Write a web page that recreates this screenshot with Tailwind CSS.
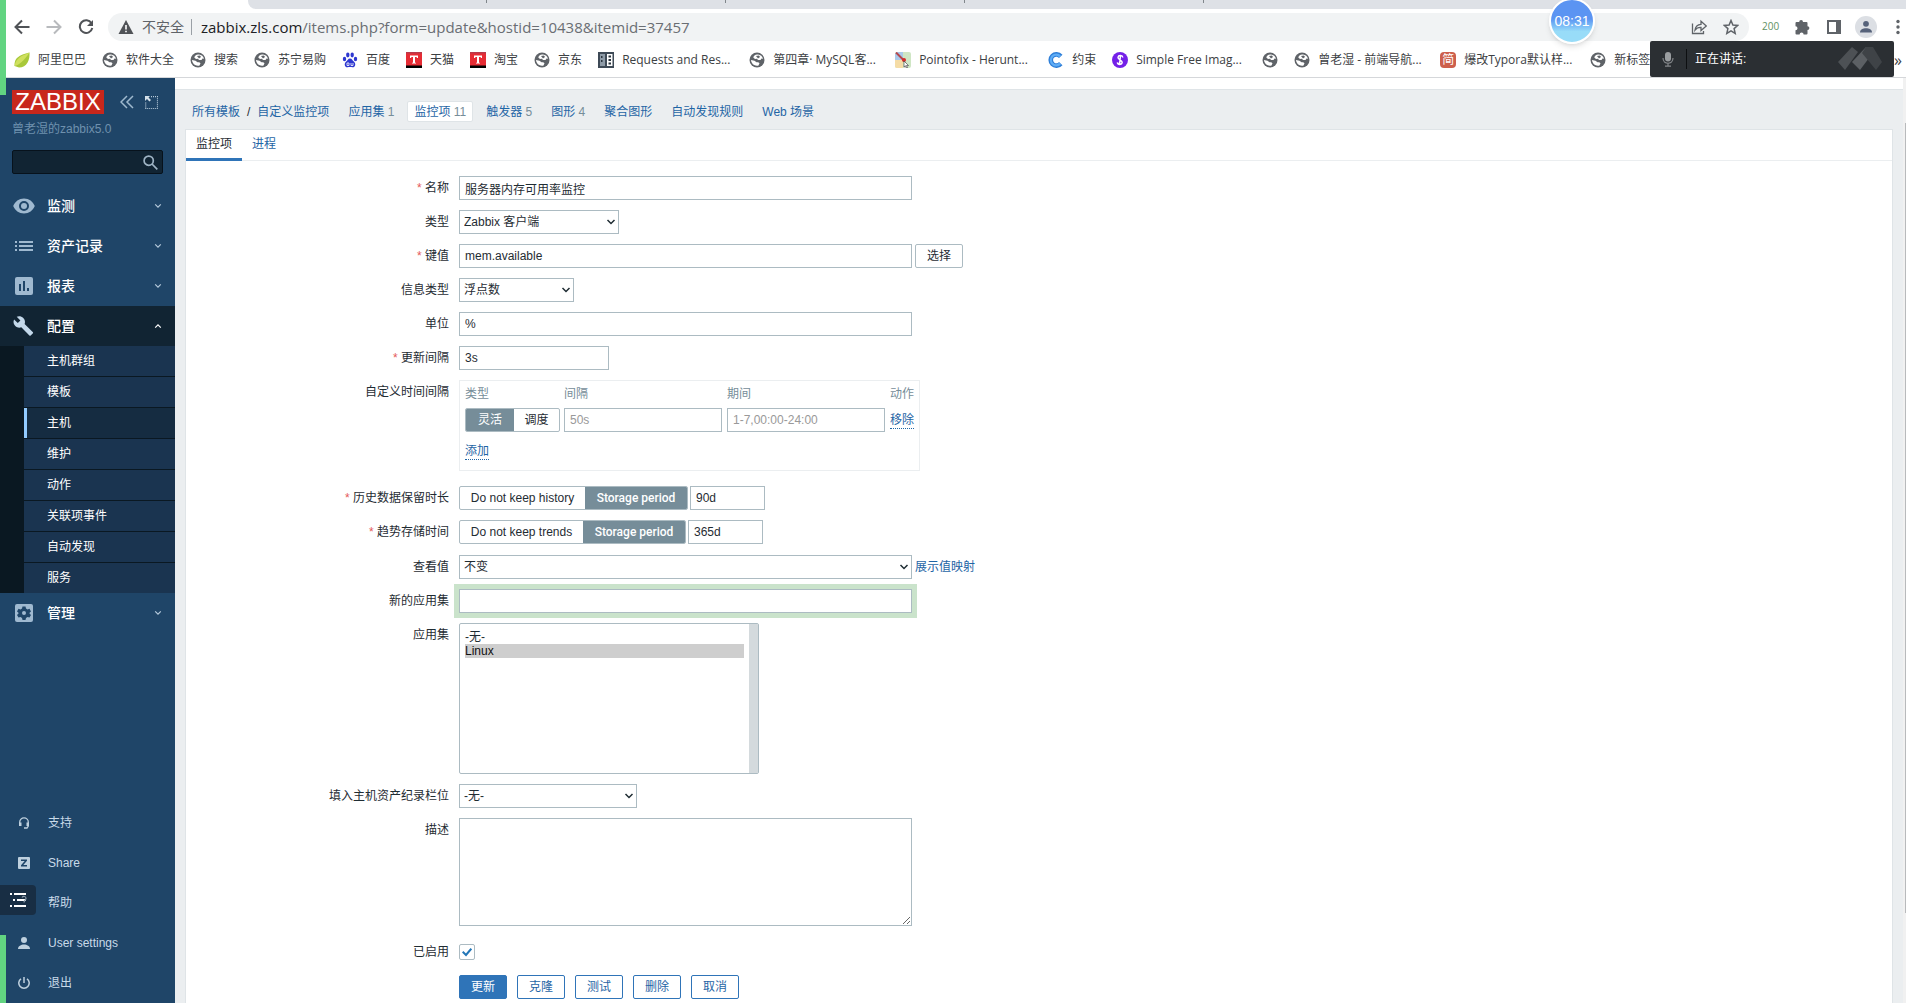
<!DOCTYPE html>
<html lang="zh-CN">
<head>
<meta charset="utf-8">
<title>配置监控项</title>
<script src="https://cdn.jsdelivr.net/npm/@tailwindcss/browser@4"></script>
</head>
<body class="relative flex min-h-screen flex-col overflow-x-hidden bg-white font-['Liberation_Sans','Noto_Sans_CJK_SC',sans-serif] text-xs text-[#1f2c33]">

<!-- Shared symbols -->
<svg class="hidden" aria-hidden="true">
  <symbol id="globe" viewBox="0 0 16 16"><circle cx="8" cy="8" r="7.500" fill="#5f6368"/><path d="M9 2.500C6.500 2 4.500 3.500 4.300 5.500L6 7l2-.3 1 1.300h2.500l1-1.500 1.500.3C13.600 4.500 11.500 2.700 9 2.500z" fill="#fff"/><path d="M2 8l3.500.8 2 1.500h1.700l1.300 1-1 2.200C6 14.500 2.300 12 2 8z" fill="#fff"/><path d="M7 4l3-.5 1 1.500-2 1.500z" fill="#5f6368"/></symbol>
  <symbol id="down" viewBox="0 0 10 10"><path d="M1.500 3L5 6.500 8.500 3" fill="none" stroke="currentColor" stroke-width="1.500"/></symbol>
  <symbol id="tmall" viewBox="0 0 16 16"><path d="M0 0h16v16H0z" fill="#e62c34"/><path d="M0 0h16v1.500H0z" fill="#b93a4a"/><path d="M0 13.500h16V16H0z" fill="#000"/><path d="M4 3.500h8v2.500h-1l-.5-1H9v5.500l1 .5v.5H6V11l1-.5V5H5.500L5 6H4z" fill="#fff"/></symbol>
</svg>

<!-- Browser chrome -->
<header class="font-['Open_Sans','Noto_Sans_CJK_SC',sans-serif]">
  <div class="flex h-[9px] bg-white pl-[248px]">
    <div class="flex flex-1 rounded-bl-lg bg-[#dee1e6]">
      <div class="h-[3px] w-[239px] border-r border-[#80868b]"></div>
      <div class="h-[3px] w-[239px] border-r border-[#80868b]"></div>
      <div class="h-[3px] w-[239px] border-r border-[#80868b]"></div>
      <div class="h-[3px] w-[239px] border-r border-[#80868b]"></div>
    </div>
  </div>
  <div class="flex h-9 items-center pl-[14px]">
    <button aria-label="后退"><svg class="size-4" viewBox="0 0 16 16" fill="none" stroke="#505357" stroke-width="2"><path d="M15.500 8H2M8 1.500L1.500 8 8 14.500"/></svg></button>
    <button aria-label="前进" class="ml-4"><svg class="size-4" viewBox="0 0 16 16" fill="none" stroke="#b8babd" stroke-width="2"><path d="M.5 8H14M8 1.500L14.500 8 8 14.500"/></svg></button>
    <button aria-label="重新加载" class="ml-4"><svg class="size-4" viewBox="0 0 16 16" fill="none" stroke="#505357" stroke-width="2"><path d="M13.500 4.200A6.300 6.300 0 1 0 14.300 9"/><path d="M15 1v6H9z" fill="#505357" stroke="none"/></svg></button>
    <div class="ml-[14px] flex h-7 flex-1 items-center rounded-full bg-[#f1f3f4] px-[10px]">
      <svg class="size-4" viewBox="0 0 16 16"><path d="M8 1l7.500 14H.5z" fill="#505357"/><path d="M7.200 6h1.600v4.500H7.200zM7.200 11.700h1.600v1.600H7.200z" fill="#fff"/></svg>
      <span class="ml-2 text-sm leading-5 text-[#5f6368]">不安全</span>
      <span class="ml-[7px] h-4 w-px bg-[#9aa0a6]"></span>
      <span class="ml-[9px] text-[15px] leading-5 text-[#6a6e73]"><span class="text-[#202124]">zabbix.zls.com</span>/items.php?form=update&amp;hostid=10438&amp;itemid=37457</span>
      <svg class="ml-auto size-4" viewBox="0 0 16 16" fill="none" stroke="#5f6368" stroke-width="1.300"><path d="M1.500 4.500v10h11V12"/><path d="M4 11c.5-4 2.500-5.500 6-5.700V2.200L15.300 7 10 11.500V8.300C7.500 8.200 5.500 9 4 11z"/></svg>
      <svg class="ml-4 size-4" viewBox="0 0 16 16" fill="none" stroke="#5f6368" stroke-width="1.500"><path d="M8 1.500l1.900 4.500 4.900.4-3.700 3.200 1.100 4.800L8 11.900l-4.200 2.500 1.100-4.800L1.200 6.400 6.100 6z"/></svg>
    </div>
    <span class="ml-[13px] w-5 text-[10px] text-[#5f9163]">200</span>
    <svg class="ml-3 size-4" viewBox="0 0 16 16" fill="#5f6368"><path d="M5.200 3a1.900 1.900 0 0 1 3.800 0h3.500a1 1 0 0 1 1 1v3.200a1.900 1.900 0 0 1 0 3.800v3.500a1 1 0 0 1-1 1H9.600a2 2 0 0 0-4 0H2.500a1 1 0 0 1-1-1v-3.200a2 2 0 0 0 0-4V4a1 1 0 0 1 1-1z"/></svg>
    <svg class="ml-4 size-4" viewBox="0 0 16 16"><path d="M1 1h14v14H1z" fill="#5f6368"/><path d="M3 3h7v10H3z" fill="#fff"/></svg>
    <svg class="ml-[13px] size-[22px]" viewBox="0 0 22 22"><circle cx="11" cy="11" r="11" fill="#dcdfe4"/><circle cx="11" cy="7.800" r="2.900" fill="#56627a"/><path d="M5 16.500c0-3 3-4.200 6-4.200s6 1.200 6 4.200z" fill="#56627a"/></svg>
    <svg class="ml-[13px] size-4" viewBox="0 0 16 16" fill="#5f6368"><circle cx="8" cy="2.500" r="1.700"/><circle cx="8" cy="8" r="1.700"/><circle cx="8" cy="13.500" r="1.700"/></svg>
  </div>
  <nav class="flex h-[33px] items-center gap-4 whitespace-nowrap border-b border-[#d5d7da] pb-[3px] pl-[14px] text-xs text-[#3c4043]">
    <a href="#" class="flex items-center gap-2"><svg class="size-4" viewBox="0 0 16 16"><path d="M.5 14C0 6 5 3 15.500.5 16 8 13 15.500 5 15.500z" fill="#a8c83a"/><path d="M.5 14C5 13 10 9 15.500.5 10 3 2 5 .5 14z" fill="#cfe05e"/></svg>阿里巴巴</a>
    <a href="#" class="flex items-center gap-2"><svg class="size-4"><use href="#globe"/></svg>软件大全</a>
    <a href="#" class="flex items-center gap-2"><svg class="size-4"><use href="#globe"/></svg>搜索</a>
    <a href="#" class="flex items-center gap-2"><svg class="size-4"><use href="#globe"/></svg>苏宁易购</a>
    <a href="#" class="flex items-center gap-2"><svg class="size-4" viewBox="0 0 16 16" fill="#2d37d0"><ellipse cx="2.500" cy="7" rx="1.700" ry="2.200"/><ellipse cx="5.800" cy="3" rx="1.700" ry="2.400"/><ellipse cx="10.200" cy="3" rx="1.700" ry="2.400"/><ellipse cx="13.500" cy="7" rx="1.700" ry="2.200"/><path d="M8 6.500c2 0 2.500 2 4 3.200 2.300 2 1.200 5.800-1.500 5.600-2-.3-3-.3-5 0C2.800 15.500 1.700 11.700 4 9.700 5.500 8.500 6 6.500 8 6.500z"/><path d="M5 11h2v2.500H5zM9 11v2.500h2V11" fill="none" stroke="#fff" stroke-width=".8"/></svg>百度</a>
    <a href="#" class="flex items-center gap-2"><svg class="size-4"><use href="#tmall"/></svg>天猫</a>
    <a href="#" class="flex items-center gap-2"><svg class="size-4"><use href="#tmall"/></svg>淘宝</a>
    <a href="#" class="flex items-center gap-2"><svg class="size-4"><use href="#globe"/></svg>京东</a>
    <a href="#" class="flex w-[135px] items-center gap-2"><svg class="size-4 shrink-0" viewBox="0 0 16 16"><path d="M0 0h16v16H0z" fill="#3e4a56"/><path d="M2 2h5v12H2z" fill="#8d9aa6"/><path d="M9 2h5.500v12H9z" fill="#fff"/><path d="M3 4h1.500v2H3zM3 8h1.500v2H3zM10.500 3.500h2.500v2h-2.500zM10.500 7h2.500v2h-2.500zM10.500 10.500h2.500v2h-2.500z" fill="#2a343e"/></svg>Requests and Res...</a>
    <a href="#" class="flex w-[130px] items-center gap-2"><svg class="size-4 shrink-0"><use href="#globe"/></svg>第四章· MySQL客...</a>
    <a href="#" class="flex w-[137px] items-center gap-2"><svg class="size-4 shrink-0" viewBox="0 0 16 16"><rect width="16" height="16" rx="2" fill="#cfe6c4"/><path d="M0 8h8v8H2a2 2 0 0 1-2-2z" fill="#f5dca6"/><path d="M2 0h6v8H0V2z" fill="#a9c9ea"/><path d="M9 9l4 4-1 3H9z" fill="#ddd"/><path d="M1 .5L8.500 8" stroke="#b5474c" stroke-width="2"/><circle cx="9" cy="8" r="2" fill="#d22c2c"/><path d="M9 9v6l1.500-1.200 1 2.200 1-.5-1-2h2z" fill="#fff" stroke="#333" stroke-width=".6"/></svg>Pointofix - Herunt...</a>
    <a href="#" class="flex items-center gap-2"><svg class="size-4" viewBox="0 0 16 16"><path d="M14.500 2.800A8 8 0 1 0 14.500 13.200L11 10A3.300 3.300 0 1 1 11 6z" fill="#2f7fd8"/><path d="M13 3.500A6.500 6.500 0 1 0 13 12.500L11.200 10.800A4.200 4.200 0 1 1 11.200 5.200z" fill="#5fadf6"/></svg>约束</a>
    <a href="#" class="flex w-[134px] items-center gap-2"><svg class="size-4 shrink-0" viewBox="0 0 16 16"><circle cx="8" cy="8" r="8" fill="#7420e8"/><path d="M10.800 5.500C10.500 3 6.500 2.800 6 5.300c-.3 2.200 4.500 2.800 4.200 5.300-.3 2.300-4.500 2.500-4.800-.2M8.500 3.500L7.500 12.500" fill="none" stroke="#fff" stroke-width="1.500"/></svg>Simple Free Imag...</a>
    <a href="#" aria-label="书签" class="flex items-center"><svg class="size-4"><use href="#globe"/></svg></a>
    <a href="#" class="flex w-[130px] items-center gap-2"><svg class="size-4 shrink-0"><use href="#globe"/></svg>曾老湿 - 前端导航...</a>
    <a href="#" class="flex w-[134px] items-center gap-2"><span class="flex size-4 shrink-0 items-center justify-center rounded-sm bg-[#cd5f4c] leading-4 text-white">简</span>爆改Typora默认样...</a>
    <a href="#" class="flex items-center gap-2"><svg class="size-4"><use href="#globe"/></svg>新标签</a>
    <button class="ml-auto pr-1 text-base leading-4" aria-label="更多书签">»</button>
  </nav>
</header>

<div class="flex flex-1">
  <!-- Sidebar -->
  <aside class="flex w-[175px] shrink-0 flex-col bg-[#1f4568] text-white">
    <div class="flex items-center pl-3 pt-3">
      <a href="#" class="flex h-6 w-[92px] items-center justify-center bg-[#c8271c] text-2xl leading-6">ZABBIX</a>
      <button aria-label="收起" class="ml-4"><svg class="size-[14px]" viewBox="0 0 14 14" fill="none" stroke="#9fb9ce" stroke-width="1.500"><path d="M7 1L1 7l6 6M13 1L7 7l6 6"/></svg></button>
      <button aria-label="隐藏" class="ml-[11px]"><svg class="size-[13px]" viewBox="0 0 13 13"><path d="M6 .7h6.500v11.800H.7V6" fill="none" stroke="#b8cbda" stroke-width="1.200" stroke-dasharray="1 1"/><path d="M0 0h5L3.500 1.500l2.500 2.500-1.500 1.500L2 3 0 5z" fill="#d5e1ea"/></svg></button>
    </div>
    <div class="mt-[5px] pl-3 leading-5 text-[#6f91ae]">曾老湿的zabbix5.0</div>
    <div class="mx-3 mt-[11px] flex h-6 items-center rounded-xs border border-[#07121c] bg-[#112433] pr-1">
      <input aria-label="搜索" class="min-w-0 flex-1 px-1 outline-none">
      <svg class="size-[15px]" viewBox="0 0 15 15" fill="none" stroke="#9fb4c5" stroke-width="1.700"><circle cx="5.700" cy="5.700" r="4.600"/><path d="M9 9l5.300 5.300"/></svg>
    </div>
    <nav class="mt-3 text-sm font-medium">
      <a href="#" class="flex h-10 items-center pl-3 pr-[13px]"><svg class="w-6" viewBox="0 0 24 20" fill="#9fb9d0"><path d="M12 2.500C7 2.500 3 5.500 1.200 10 3 14.500 7 17.500 12 17.500s9-3 10.800-7.500C21 5.500 17 2.500 12 2.500zm0 12.500a5 5 0 1 1 0-10 5 5 0 0 1 0 10z"/><circle cx="12" cy="10" r="3"/></svg><span class="ml-[11px] flex-1">监测</span><svg class="size-2 text-[#b5cadb]"><use href="#down"/></svg></a>
      <a href="#" class="flex h-10 items-center pl-3 pr-[13px]"><svg class="w-6" viewBox="0 0 24 20" fill="#9fb9d0"><path d="M3 5h2v2H3zM7 5h14v2H7zM3 9h2v2H3zM7 9h14v2H7zM3 13h2v2H3zM7 13h14v2H7z"/></svg><span class="ml-[11px] flex-1">资产记录</span><svg class="size-2 text-[#b5cadb]"><use href="#down"/></svg></a>
      <a href="#" class="flex h-10 items-center pl-3 pr-[13px]"><svg class="w-6" viewBox="0 0 24 20"><rect x="3" y="1" width="18" height="18" rx="2" fill="#9fb9d0"/><path d="M7 8h2v7H7zM11 5h2v10h-2zM15 12h2v3h-2z" fill="#1f4568"/></svg><span class="ml-[11px] flex-1">报表</span><svg class="size-2 text-[#b5cadb]"><use href="#down"/></svg></a>
      <a href="#" class="flex h-10 items-center bg-[#112433] pl-3 pr-[13px]"><svg class="w-6" viewBox="0 0 24 20" fill="#c3d8ea"><path d="M20.700 16L12.600 8c.8-2 .3-4.400-1.300-6C9.500.2 6.900-.2 4.700.8l3.700 3.700-2.600 2.600L2.100 3.400c-1.100 2.200-.6 4.900 1.200 6.600 1.600 1.600 4 2.100 6 1.300l8.100 8.100c.4.400.9.400 1.300 0l2-2c.5-.5.500-1.100 0-1.400z"/></svg><span class="ml-[11px] flex-1">配置</span><svg class="size-2 rotate-180"><use href="#down"/></svg></a>
      <ul class="divide-y divide-[#0a1822] border-l-[24px] border-[#0a1822] bg-[#1a3450] text-xs font-normal">
        <li><a href="#" class="block h-[30px] pl-[23px] leading-[30px]">主机群组</a></li>
        <li><a href="#" class="block h-[30px] pl-[23px] leading-[30px]">模板</a></li>
        <li><a href="#" class="block h-[30px] border-l-3 border-[#92cbff] bg-[#152c41] pl-5 leading-[30px]">主机</a></li>
        <li><a href="#" class="block h-[30px] pl-[23px] leading-[30px]">维护</a></li>
        <li><a href="#" class="block h-[30px] pl-[23px] leading-[30px]">动作</a></li>
        <li><a href="#" class="block h-[30px] pl-[23px] leading-[30px]">关联项事件</a></li>
        <li><a href="#" class="block h-[30px] pl-[23px] leading-[30px]">自动发现</a></li>
        <li><a href="#" class="block h-[30px] pl-[23px] leading-[30px]">服务</a></li>
      </ul>
      <a href="#" class="flex h-10 items-center pl-3 pr-[13px]"><svg class="w-6" viewBox="0 0 24 20"><rect x="3" y="1" width="18" height="18" rx="2" fill="#9fb9d0"/><path d="M10.500 3.500h3l.5 2 1.500.9 2-.6 1.500 2.600-1.500 1.400v.8l1.500 1.400-1.500 2.600-2-.6-1.500.9-.5 2h-3l-.5-2-1.500-.9-2 .6L5 12l1.500-1.400v-.8L5 8.400l1.500-2.600 2 .6 1.500-.9z" fill="#1f4568"/><circle cx="12" cy="10" r="2" fill="#9fb9d0"/></svg><span class="ml-[11px] flex-1">管理</span><svg class="size-2 text-[#b5cadb]"><use href="#down"/></svg></a>
    </nav>
    <nav class="mt-auto text-[#c9dae8]">
      <a href="#" class="flex h-10 items-center gap-[18px] pl-[18px]"><svg class="size-3" viewBox="0 0 12 12"><path d="M1.700 7V5.200a4.300 4.300 0 0 1 8.600 0V9L9 11H6" fill="none" stroke="#bed0de" stroke-width="1.300"/><path d="M1 5.500h2.500V9H1zM8.500 5.500H11V9H8.500z" fill="#bed0de"/></svg>支持</a>
      <a href="#" class="flex h-10 items-center gap-[18px] pl-[18px]"><svg class="size-3" viewBox="0 0 12 12"><rect width="12" height="12" rx="1" fill="#bed0de"/><path d="M3 2.500h6v1.300L5.300 8H9v1.500H3V8.200L6.700 4H3z" fill="#1f4568"/></svg>Share</a>
      <a href="#" class="flex h-10 items-center pl-12">帮助</a>
      <a href="#" class="flex h-10 items-center gap-[18px] pl-[18px]"><svg class="size-3" viewBox="0 0 12 12" fill="#bed0de"><circle cx="6" cy="3" r="3"/><path d="M0 12c0-3 3-4.500 6-4.500S12 9 12 12z"/></svg>User settings</a>
      <a href="#" class="flex h-10 items-center gap-[18px] pl-[18px]"><svg class="size-3" viewBox="0 0 12 12" fill="none" stroke="#bed0de" stroke-width="1.500"><path d="M6 0v6M3 1.800a5.200 5.200 0 1 0 6 0"/></svg>退出</a>
    </nav>
  </aside>

  <!-- Content -->
  <main class="flex min-w-0 flex-1 flex-col bg-[#ebeef0]">
    <div class="h-3 border-b border-[#dfe4e7] bg-white"></div>
    <nav class="flex h-[39px] items-center gap-[19px] pl-[17px] pr-[11px] pt-1 text-[#1f65a5]">
      <span class="flex gap-[7px]"><a href="#">所有模板</a><span class="text-[#1f2c33]">/</span><a href="#">自定义监控项</a></span>
      <a href="#">应用集 <span class="text-[#768d99]">1</span></a>
      <a href="#" class="-mx-[6px] h-[21px] rounded-xs border border-[#dfe4e7] bg-white px-1.5 leading-5">监控项 <span class="text-[#768d99]">11</span></a>
      <a href="#">触发器 <span class="text-[#768d99]">5</span></a>
      <a href="#">图形 <span class="text-[#768d99]">4</span></a>
      <a href="#">聚合图形</a>
      <a href="#">自动发现规则</a>
      <a href="#">Web 场景</a>
    </nav>
    <section class="mx-[10px] flex-1 border-x border-t border-[#dfe4e7] bg-white">
      <div class="flex h-[31px] border-b border-[#ebeef0] text-[#1f65a5]">
        <a href="#" class="-mb-px border-b-3 border-[#2f74b8] px-[10px] pt-px leading-[27px] text-[#1f2c33]">监控项</a>
        <a href="#" class="px-[10px] pt-px leading-[27px]">进程</a>
      </div>
      <form class="grid grid-cols-[263px_minmax(0,1fr)] gap-[10px] pb-1 pt-[15px]">
        <label for="name" class="text-right leading-6"><span class="text-[#e45959]">*</span> 名称</label>
        <div><input id="name" value="服务器内存可用率监控" class="block h-6 w-[453px] border border-[#acbbc2] px-[5px]"></div>

        <label for="type" class="text-right leading-6">类型</label>
        <div class="relative w-[160px]"><select id="type" class="block h-6 w-full appearance-none border border-[#acbbc2] px-1"><option>Zabbix 客户端</option></select><svg class="pointer-events-none absolute right-[3px] top-[7px] size-2.5"><use href="#down"/></svg></div>

        <label for="key" class="text-right leading-6"><span class="text-[#e45959]">*</span> 键值</label>
        <div class="flex gap-[3px]"><input id="key" value="mem.available" class="h-6 w-[453px] border border-[#acbbc2] px-[5px]"><button type="button" class="h-6 w-12 rounded-xs border border-[#acbbc2]">选择</button></div>

        <label for="vtype" class="text-right leading-6">信息类型</label>
        <div class="relative w-[115px]"><select id="vtype" class="block h-6 w-full appearance-none border border-[#acbbc2] px-1"><option>浮点数</option></select><svg class="pointer-events-none absolute right-[3px] top-[7px] size-2.5"><use href="#down"/></svg></div>

        <label for="units" class="text-right leading-6">单位</label>
        <div><input id="units" value="%" class="block h-6 w-[453px] border border-[#acbbc2] px-[5px]"></div>

        <label for="delay" class="text-right leading-6"><span class="text-[#e45959]">*</span> 更新间隔</label>
        <div><input id="delay" value="3s" class="block h-6 w-[150px] border border-[#acbbc2] px-[5px]"></div>

        <span class="text-right leading-6">自定义时间间隔</span>
        <div class="mb-[5px] w-[461px] border border-[#ebeef0] pl-[5px]">
          <table class="w-full table-fixed text-left">
            <thead><tr class="h-[26px] text-[#768d99]"><th class="w-[99px] font-normal">类型</th><th class="w-[163px] font-normal">间隔</th><th class="w-[163px] font-normal">期间</th><th class="font-normal">动作</th></tr></thead>
            <tbody>
              <tr class="h-[26px]">
                <td><div class="flex h-6 w-[95px] overflow-hidden rounded-xs border border-[#acbbc2] text-center leading-[22px]"><label class="w-12 bg-[#768d99] text-white"><input type="radio" name="kind" checked class="sr-only">灵活</label><label class="flex-1"><input type="radio" name="kind" class="sr-only">调度</label></div></td>
                <td><input aria-label="间隔" placeholder="50s" class="block h-6 w-[158px] border border-[#acbbc2] px-[5px] placeholder:text-[#999]"></td>
                <td><input aria-label="期间" placeholder="1-7,00:00-24:00" class="block h-6 w-[158px] border border-[#acbbc2] px-[5px] placeholder:text-[#999]"></td>
                <td><a href="#" class="inline-block border-b border-dotted border-[#1f65a5] leading-4 text-[#1f65a5]">移除</a></td>
              </tr>
              <tr class="h-[37px]"><td colspan="4"><a href="#" class="inline-block border-b border-dotted border-[#1f65a5] leading-4 text-[#1f65a5]">添加</a></td></tr>
            </tbody>
          </table>
        </div>

        <label for="history" class="text-right leading-6"><span class="text-[#e45959]">*</span> 历史数据保留时长</label>
        <div class="flex gap-0.5">
          <div class="flex h-6 w-[229px] overflow-hidden rounded-xs border border-[#acbbc2] text-center leading-[22px]"><label class="flex-1"><input type="radio" name="hist" class="sr-only">Do not keep history</label><label class="w-[102px] bg-[#768d99] font-['Roboto'] font-medium text-white"><input type="radio" name="hist" checked class="sr-only">Storage period</label></div>
          <input id="history" value="90d" class="h-6 w-[75px] border border-[#acbbc2] px-[5px]">
        </div>

        <label for="trends" class="text-right leading-6"><span class="text-[#e45959]">*</span> 趋势存储时间</label>
        <div class="flex h-[25px] gap-0.5">
          <div class="flex h-6 w-[227px] overflow-hidden rounded-xs border border-[#acbbc2] text-center leading-[22px]"><label class="flex-1"><input type="radio" name="trend" class="sr-only">Do not keep trends</label><label class="w-[102px] bg-[#768d99] font-['Roboto'] font-medium text-white"><input type="radio" name="trend" checked class="sr-only">Storage period</label></div>
          <input id="trends" value="365d" class="h-6 w-[75px] border border-[#acbbc2] px-[5px]">
        </div>

        <label for="valuemap" class="text-right leading-6">查看值</label>
        <div class="flex items-center gap-[3px]"><div class="relative w-[453px]"><select id="valuemap" class="block h-6 w-full appearance-none border border-[#acbbc2] px-1"><option>不变</option></select><svg class="pointer-events-none absolute right-[3px] top-[7px] size-2.5"><use href="#down"/></svg></div><a href="#" class="text-[#1f65a5]">展示值映射</a></div>

        <label for="newapp" class="text-right leading-6">新的应用集</label>
        <div><input id="newapp" class="block h-6 w-[453px] border border-[#acbbc2] px-[5px] shadow-[0_0_0_5px_#cae3cb]"></div>

        <label for="apps" class="text-right leading-6">应用集</label>
        <div class="flex h-[151px] w-[300px] rounded-xs border border-[#acbbc2]">
          <select id="apps" multiple class="flex-1 overflow-hidden px-[5px] py-[3px] outline-none"><option class="h-[17px] p-0 leading-[14px]">-无-</option><option selected class="h-[14px] p-0 leading-[14px]">Linux</option></select>
          <div class="w-[9px] bg-[#d4dadd]"></div>
        </div>

        <label for="inventory" class="text-right leading-6">填入主机资产纪录栏位</label>
        <div class="relative w-[178px]"><select id="inventory" class="block h-6 w-full appearance-none border border-[#acbbc2] px-1"><option>-无-</option></select><svg class="pointer-events-none absolute right-[3px] top-[7px] size-2.5"><use href="#down"/></svg></div>

        <label for="desc" class="text-right leading-6">描述</label>
        <div class="pb-1"><textarea id="desc" class="block h-[108px] w-[453px] border border-[#acbbc2] p-1"></textarea></div>

        <label for="enabled" class="text-right leading-6">已启用</label>
        <div class="h-[25px] pt-1">
          <div class="relative size-4"><input id="enabled" type="checkbox" checked class="block size-4 appearance-none rounded-xs border border-[#acbbc2]"><svg class="pointer-events-none absolute left-[3px] top-[3px] size-2.5" viewBox="0 0 10 10" fill="none" stroke="#2377b8" stroke-width="2"><path d="M.7 4.700L4 8 9.300 1.700"/></svg></div>
        </div>

        <span></span>
        <div class="flex gap-[10px] text-[#1f65a5]">
          <button type="button" class="h-6 w-12 rounded-xs border border-[#2f74b8] bg-[#2f74b8] text-white">更新</button>
          <button type="button" class="h-6 w-12 rounded-xs border border-[#2f74b8]">克隆</button>
          <button type="button" class="h-6 w-12 rounded-xs border border-[#2f74b8]">测试</button>
          <button type="button" class="h-6 w-12 rounded-xs border border-[#2f74b8]">删除</button>
          <button type="button" class="h-6 w-12 rounded-xs border border-[#2f74b8]">取消</button>
        </div>
      </form>
    </section>
  </main>
  <div class="flex w-[3px] justify-end bg-[#f1f1f1] pb-[90px] pt-[45px]"><div class="w-px bg-[#b8babc]"></div></div>
</div>

<!-- Desktop overlays -->
<div class="absolute left-0 top-0 h-[95px] w-[6px] bg-[#62d481]"></div>
<div class="absolute bottom-0 left-0 h-[68px] w-[6px] bg-[#62d481]"></div>
<button aria-label="目录" class="absolute bottom-[88px] left-0 flex h-[30px] w-9 items-center rounded-r-sm bg-[#182e44] pl-[10px]"><svg class="h-[15px] w-[17px]" viewBox="0 0 17 15" fill="#fff"><path d="M0 0h2v2H0zM4 0h12v2H4zM3 6h2v2H3zM7 6h9v2H7zM0 12h2v2H0zM4 12h12v2H4z"/><path d="M12 4.500c1-1.500 4-1.500 4 .8 0 2-2 2-2 4.200" fill="none" stroke="#8a9aa8" stroke-width="1.200"/></svg></button>
<div class="absolute -top-[2px] right-[311px] flex size-[46px] items-center justify-center rounded-full border-2 border-white bg-linear-to-b from-[#5b94f2] from-45% to-[#98dcf8] to-75% text-sm text-white shadow-md">08:31</div>
<div class="absolute right-3 top-[41px] flex h-9 w-[244px] items-center rounded-xs bg-[#2b2f33] px-3 text-white">
  <svg class="h-[15px] w-3" viewBox="0 0 12 15"><rect x="3" y="0" width="6" height="9.500" rx="3" fill="#9a9da0"/><path d="M1 6c0 7 10 7 10 0M6 11v3M3 14.200h6" fill="none" stroke="#85888b" stroke-width="1.200"/></svg>
  <span class="ml-3 h-5 w-px bg-[#0d0f11]"></span>
  <span class="ml-2 flex-1">正在讲话:</span>
  <svg class="h-6 w-11" viewBox="0 0 44 24"><path d="M0 15L14 0l6 5L7 23z" fill="#4d5155"/><path d="M14 15L28 0l6 7-12 16z" fill="#5c6064"/><path d="M24 6l4-6h7l9 15-6 8z" fill="#3f4347"/></svg>
</div>
</body>
</html>
